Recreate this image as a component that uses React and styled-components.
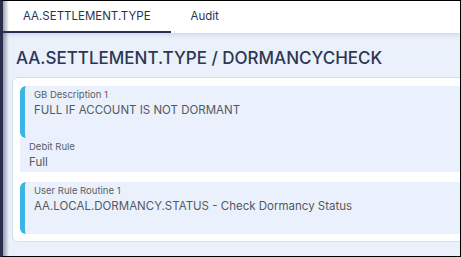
import React from "react";
import styled, { createGlobalStyle, css } from "styled-components";

const GlobalStyle = createGlobalStyle`
  html, body {
    margin: 0;
    padding: 0;
  }
  body {
    width: 461px;
    height: 257px;
    overflow: hidden;
    font-family: Inter, "Noto Sans", sans-serif;
  }
`;

const Frame = styled.div`
  position: relative;
  box-sizing: border-box;
  height: 257px;
  display: flex;
  flex-direction: column;
  overflow: hidden;
  background: #eaf1fb;
  border: 1px solid #000;
  border-left: 3px solid #2b2d4d;

  &::before {
    content: "";
    position: absolute;
    top: 0;
    bottom: 0;
    left: 0;
    width: 6px;
    z-index: 5;
    background: linear-gradient(to right, rgba(43, 45, 77, 0.45), rgba(43, 45, 77, 0));
    pointer-events: none;
  }
`;

const TabBar = styled.div`
  position: relative;
  z-index: 2;
  display: flex;
  height: 32px;
  background: #fff;
  box-shadow: 0 2px 4px rgba(40, 50, 80, 0.14);
`;

const Tab = styled.div`
  box-sizing: border-box;
  display: flex;
  align-items: center;
  padding: 0 20px;
  font-size: 11.5px;
  color: #2a3350;
  border-bottom: 2px solid transparent;
  ${p =>
    p.active &&
    css`
      border-bottom-color: #2b2f55;
    `}
`;

const Content = styled.div`
  padding: 15px 0 0 9px;
`;

const Title = styled.h1`
  margin: 0 0 9px;
  padding-left: 4px;
  font-size: 17px;
  line-height: 20px;
  font-weight: 500;
  color: #2d3752;
  white-space: nowrap;
`;

const Card = styled.div`
  margin-right: -20px;
  padding: 8px 0 7px 7px;
  background: #fff;
  border: 1px solid #d3deee;
  border-radius: 6px;
  display: flex;
  flex-direction: column;
`;

const Field = styled.div`
  box-sizing: border-box;
  padding: 2px 9px 1px;
  background: #eaf1fc;
  ${p =>
    p.accent &&
    css`
      min-height: 52px;
      border-left: 5px solid #3bb4e5;
      border-radius: 6px 0 0 6px;
    `}
  ${p =>
    p.spaced &&
    css`
      margin-top: 10px;
    `}
`;

const Label = styled.div`
  font-size: 9.5px;
  line-height: 13px;
  color: #5a5e66;
`;

const Value = styled.div`
  font-size: 11.5px;
  line-height: 18px;
  color: #54585f;
  white-space: nowrap;
`;

const fields = [
  { label: "GB Description 1", value: "FULL IF ACCOUNT IS NOT DORMANT", accent: true },
  { label: "Debit Rule", value: "Full" },
  {
    label: "User Rule Routine 1",
    value: "AA.LOCAL.DORMANCY.STATUS - Check Dormancy Status",
    accent: true,
    spaced: true
  }
];

const App = () => (
  <>
    <GlobalStyle />
    <Frame>
      <TabBar>
        <Tab active>AA.SETTLEMENT.TYPE</Tab>
        <Tab>Audit</Tab>
      </TabBar>
      <Content>
        <Title>AA.SETTLEMENT.TYPE / DORMANCYCHECK</Title>
        <Card>
          {fields.map(f => (
            <Field key={f.label} accent={f.accent} spaced={f.spaced}>
              <Label>{f.label}</Label>
              <Value>{f.value}</Value>
            </Field>
          ))}
        </Card>
      </Content>
    </Frame>
  </>
);

export default App;
